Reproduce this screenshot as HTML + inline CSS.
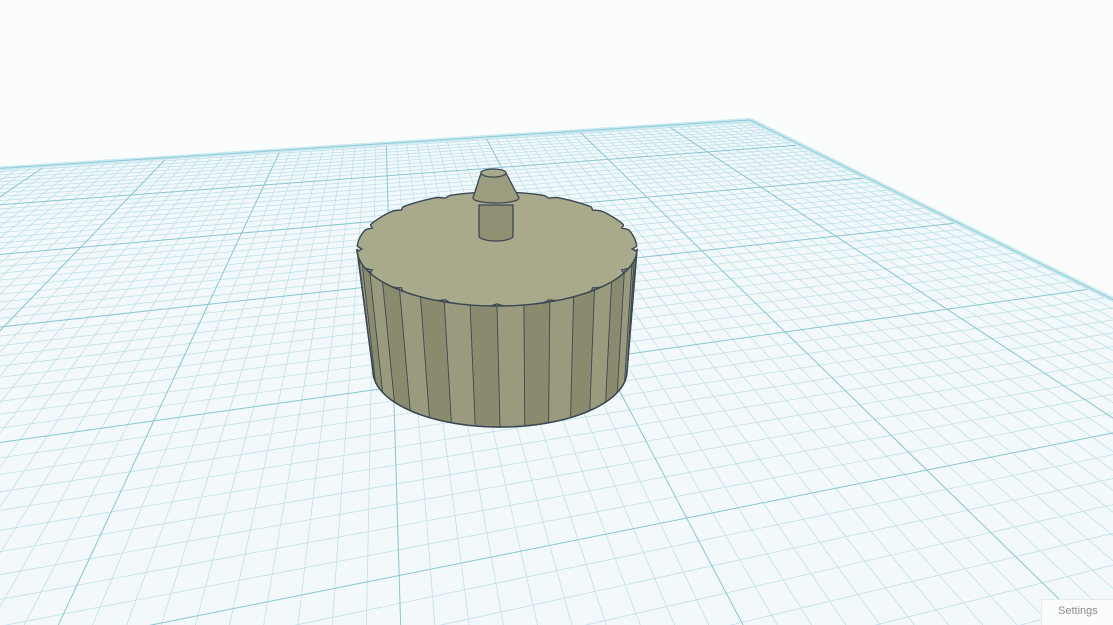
<!DOCTYPE html>
<html><head><meta charset="utf-8"><style>
html,body{margin:0;padding:0;background:#fbfcfc;width:1113px;height:625px;overflow:hidden;font-family:"Liberation Sans",sans-serif}
#s{position:absolute;left:0;top:0}
.set{position:absolute;left:1041px;top:599px;width:72px;height:26px;background:#fbfcfc;border:1px solid #e6eaec;border-right:none;border-bottom:none;border-radius:2px 0 0 0;color:#8a8f93;font-size:11px;line-height:22px;padding-left:16px;box-sizing:border-box}
</style></head><body>
<svg id="s" width="1113" height="625" viewBox="0 0 1113 625"></svg>
<div class="set">Settings</div>
<script>
var NS="http://www.w3.org/2000/svg",S=document.getElementById('s');
function el(n,a){var e=document.createElementNS(NS,n);for(var k in a)e.setAttribute(k,a[k]);S.appendChild(e);return e;}
function P(t,s){var w=1+t+s;return[(750+3600*t+380*s)/w,(120-64*t-63*s)/w];}
var A=0.0283,B=0.12,TM=-0.56,SM=-0.9;
var pts=[];
function push(t,s){var p=P(t,s);pts.push(p[0].toFixed(1)+','+p[1].toFixed(1));}
for(var i=0;i<=40;i++)push(TM*i/40,0);
for(var i=0;i<=40;i++){var t=TM,s=SM*i/40; if(1+t+s>0.06)push(t,s);}
for(var i=0;i<=40;i++){var s=SM, t=TM*(1-i/40); if(1+t+s>0.06)push(t,s);}
for(var i=0;i<=40;i++)push(0,SM*(1-i/40));
el('polygon',{points:pts.join(' '),fill:'#f3f9fa'});
function line(t1,s1,t2,s2,c,w){var a=P(t1,s1),b=P(t2,s2);el('line',{x1:a[0].toFixed(1),y1:a[1].toFixed(1),x2:b[0].toFixed(1),y2:b[1].toFixed(1),stroke:c,'stroke-width':w});}
for(var k=1;k*A/10<=-TM;k++){if(k%10==0)continue;var t=-k*A/10;var smin=Math.max(SM,-0.94-t);line(t,0,t,smin,'#bfe1ea',0.8);}
for(var k=1;k*B/10<=-SM;k++){if(k%10==0)continue;var s=-k*B/10;var tmin=Math.max(TM,-0.94-s);if(tmin>0)continue;line(0,s,tmin,s,'#bfe1ea',0.8);}
for(var k=1;k*A<=-TM;k++){var t=-k*A;var smin=Math.max(SM,-0.94-t);line(t,0,t,smin,'#88c6d4',1);}
for(var k=1;k*B<=-SM;k++){var s=-k*B;var tmin=Math.max(TM,-0.94-s);line(0,s,tmin,s,'#88c6d4',1);}
line(0,0,TM,0,'#cbe9f1',4);line(0,0,0,SM,'#cbe9f1',5);
line(0,0,TM,0,'#8dcbdc',1);line(0,0,0,SM,'#8dcbdc',1);

var T={x:497,y:249,rx:140,ry:57},Bo={x:500,y:371,rx:127,ry:56};
var N=16;
function pt(E,a,r){r=r||1;return[E.x+E.rx*r*Math.cos(a),E.y+E.ry*r*Math.sin(a)];}
var d='M'+pt(T,Math.PI)+' ';
for(var i=0;i<=60;i++){d+='L'+pt(T,Math.PI-Math.PI*i/60)+' ';}
for(var i=0;i<=60;i++){d+='L'+pt(Bo,Math.PI*i/60)+' ';}
el('path',{d:d+'Z',fill:'#8e8e72',stroke:'#3c4853','stroke-width':1.5});
for(var i=0;i<N;i++){var a1=Math.PI*i/N,a2=Math.PI*(i+1)/N;
 var p1=pt(T,a1,0.985),p2=pt(T,a2,0.985),q1=pt(Bo,a1),q2=pt(Bo,a2);
 var sh=0.5+0.5*Math.cos((a1+a2)/2+0.5);
 var c=(i%2)?'#9a9a7e':'#8a8a6e';
 el('path',{d:'M'+p1+' L'+p2+' L'+q2+' L'+q1+' Z',fill:c});
 el('line',{x1:p1[0],y1:p1[1],x2:q1[0],y2:q1[1],stroke:'#3c4853','stroke-width':0.9});
}
el('path',{d:d+'Z',fill:'none',stroke:'#3c4853','stroke-width':1.5});
var td='';
for(var i=0;i<=256;i++){var a=2*Math.PI*i/256;var r=1-0.035*Math.pow(Math.max(0,Math.cos(a*N)),10);var p=pt(T,a,r);td+=(i?'L':'M')+p[0].toFixed(1)+','+p[1].toFixed(1)+' ';}
el('path',{d:td+'Z',fill:'#a9a98b',stroke:'#3c4853','stroke-width':1.4});
el('path',{d:'M479,205 L479,236 A17,5 0 0 0 513,236 L513,205 Z',fill:'#8f8f73',stroke:'#3c4853','stroke-width':1.3});
el('path',{d:'M481,173 L473,198 A23,5 0 0 0 519,198 L506,173 Z',fill:'#9c9c7f',stroke:'#3c4853','stroke-width':1.3});
el('ellipse',{cx:493.5,cy:173,rx:12.5,ry:4,fill:'#a9a98b',stroke:'#3c4853','stroke-width':1.3});
</script>
</body></html>
